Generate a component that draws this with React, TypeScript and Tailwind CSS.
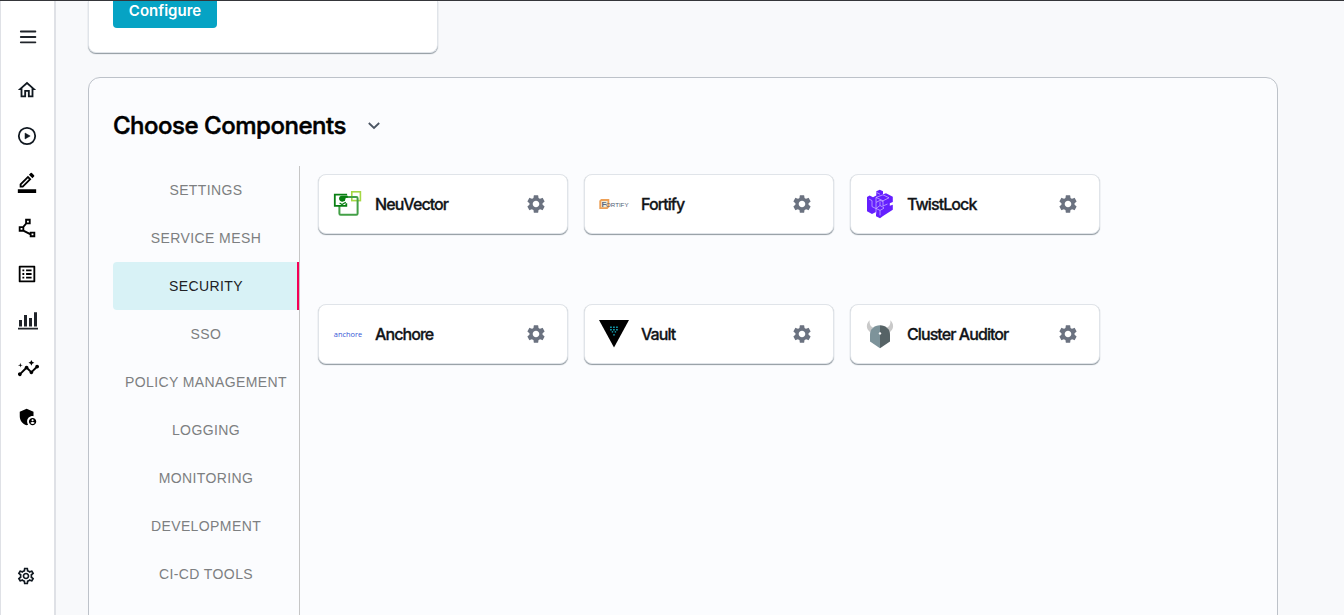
import type { ReactNode } from "react";
import {
  MdOutlineHome,
  MdOutlineBorderColor,
  MdOutlinePolyline,
  MdOutlineListAlt,
  MdInsights,
  MdAdminPanelSettings,
  MdOutlineSettings,
  MdSettings,
} from "react-icons/md";

const categories = [
  "SETTINGS",
  "SERVICE MESH",
  "SECURITY",
  "SSO",
  "POLICY MANAGEMENT",
  "LOGGING",
  "MONITORING",
  "DEVELOPMENT",
  "CI-CD TOOLS",
];

function NeuVectorLogo() {
  return (
    <svg width="30" height="30" viewBox="0 0 30 30" fill="none">
      <rect x="18.8" y="2.8" width="8.6" height="8.8" stroke="#a5d845" strokeWidth="1.6" />
      <path d="M12 8h11.4a1.2 1.2 0 0 1 1.2 1.2v15.4a1.2 1.2 0 0 1-1.2 1.2H7.6a1.2 1.2 0 0 1-1.2-1.2V16" stroke="#43a047" strokeWidth="2" />
      <path d="M13.2 6.4V5.6H1.8v11.2h11.5v-2.6" stroke="#087f12" strokeWidth="1.8" />
      <path d="M9.4 6.8h5.4v2h-2l-1 3.2-3.2.8z" fill="#087f12" />
      <path d="M6.6 14l2.4 1.6 3.8-2.4" stroke="#087f12" strokeWidth="1.2" />
      <circle cx="8.9" cy="9.6" r="2.8" fill="#087f12" />
    </svg>
  );
}

function FortifyLogo() {
  return (
    <svg width="30" height="30" viewBox="0 0 30 30" fill="none">
      <path d="M2.4 11h7v6.6l-1.4 1.6H1.2v-7z" fill="#f0ead9" stroke="#eda057" strokeWidth="1.8" />
      <text x="2.4" y="18" fontFamily="Liberation Sans, sans-serif" fontSize="8" fontWeight="700" fill="#5c6b80">F</text>
      <text x="7" y="17.6" fontFamily="Liberation Sans, sans-serif" fontSize="6" textLength="22.5" lengthAdjust="spacingAndGlyphs" fill="#4f5e73">ORTIFY</text>
    </svg>
  );
}

function TwistLockLogo() {
  return (
    <svg width="30" height="30" viewBox="0 0 30 30" fill="none" strokeLinejoin="round">
      <path
        d="M14.8.7 18 2.2v3l3-1 6.8 3.6v5.1l-3 1.4v2.4l3-1v5L18 27l-3 2.3-4-2V23l-4 2-5-2.8V8l2.6-1.4L8 8.2l3.3-1.8V2.3z"
        fill="#651fff"
      />
      <path
        d="M11.5 3.4l3.5 1.8M11 8.4l7-2.6 6 3-6 3zM18 12v5l4.5-2M11 8.4v5l4-2 3 1M4 10l3 1.6v6l4 2v5M11 13.4v6l4 2 4-2.2M15 21.4v5M15 12.5v4l-4 3M15 16.5l4 2.2"
        stroke="#d3bfff"
        strokeWidth=".7"
      />
    </svg>
  );
}

function AnchoreLogo() {
  return (
    <span className="flex h-[30px] w-[30px] items-center justify-center font-['Open_Sans',sans-serif] text-[7.4px] leading-[14px] whitespace-nowrap text-[#3456d6]">
      anchore
    </span>
  );
}

function VaultLogo() {
  return (
    <svg width="30" height="30" viewBox="0 0 30 30">
      <path d="M0 1h30L15 28.6z" fill="#000" />
      <path
        d="M11.2 7.4h1.5v1.5h-1.5zM14.2 7.4h1.5v1.5h-1.5zM17.2 7.4h1.5v1.5h-1.5zM11.2 9.9h1.5v1.5h-1.5zM14.2 9.9h1.5v1.5h-1.5zM17.2 9.9h1.5v1.5h-1.5zM12.8 12.2h1.4v1.4h-1.4zM15.7 12.2h1.4v1.4h-1.4zM14.2 15.2h1.6v1.4h-1.6z"
        fill="#16b3c8"
      />
    </svg>
  );
}

function ClusterAuditorLogo() {
  return (
    <svg width="30" height="30" viewBox="0 0 30 30">
      <path d="M4.6 1.3C.8 5 1 10 5.2 13.2L8 8.6C5.4 7.5 4.3 5 4.6 1.3zM25.4 1.3c3.8 3.7 3.6 8.7-.6 11.9L22 8.6c2.6-1.1 3.7-3.6 3.4-7.3z" fill="#c9c9c9" />
      <path d="M15 6.3C9 6.3 5 10.3 5 15.5v7l10 6.7z" fill="#7d939a" />
      <path d="M15 6.3c6 0 10 4 10 9.2v7l-10 6.7z" fill="#566366" />
      <circle cx="15" cy="14.4" r="1.2" fill="#fff" />
    </svg>
  );
}

const components: { name: string; logo: ReactNode }[] = [
  { name: "NeuVector", logo: <NeuVectorLogo /> },
  { name: "Fortify", logo: <FortifyLogo /> },
  { name: "TwistLock", logo: <TwistLockLogo /> },
  { name: "Anchore", logo: <AnchoreLogo /> },
  { name: "Vault", logo: <VaultLogo /> },
  { name: "Cluster Auditor", logo: <ClusterAuditorLogo /> },
];

function Sidebar() {
  return (
    <nav className="flex w-14 shrink-0 flex-col items-center border-r-2 border-l border-[#dfe1e6] bg-white pr-[2px] text-black">
      <svg className="mt-6 ml-0.5" width="24" height="24" fill="none" stroke="#20242a" strokeWidth="1.8" strokeLinecap="round">
        <path d="M4.8 6.5h14.6M4.8 12h14.6M4.8 17.3h14.6" />
      </svg>
      <MdOutlineHome className="mt-[30px] text-[#101820]" size={22} />
      <svg className="mt-6" width="22" height="22" fill="none">
        <circle cx="11" cy="11" r="8.2" stroke="#101820" strokeWidth="1.8" />
        <path d="M9 8l5.2 3L9 14z" fill="#101820" stroke="#101820" strokeWidth=".5" />
      </svg>
      <MdOutlineBorderColor className="mt-6" size={22} />
      <MdOutlinePolyline className="mt-6" size={22} />
      <MdOutlineListAlt className="mt-6" size={22} />
      <svg className="mt-[25px] ml-0.5" width="22" height="22" fill="#20242a">
        <path d="M1 17.7h20v1.8H1zM2 10h3v6.5H2zM7 5h3v11.5H7zM12 8h3v8.5h-3zM17 2.2h3v14.3h-3z" />
      </svg>
      <MdInsights className="mt-[25px] ml-[3px]" size={23} />
      <MdAdminPanelSettings className="mt-[26px] ml-0.5" size={22} />
      <MdOutlineSettings className="mt-auto mr-0.5 mb-[29px] text-[#101820]" size={20} />
    </nav>
  );
}

export default function App() {
  return (
    <div className="flex h-[615px] w-[1344px] overflow-hidden border-t border-[#35363a] bg-[#f8f9fb] font-['Inter',sans-serif]">
      <Sidebar />
      <main className="flex flex-1 flex-col pl-8">
        <section className="h-[52px] w-[350px] shrink-0 rounded-b-lg border border-t-0 border-[#e0e4e9] bg-white pl-6 shadow-[0_1px_1px_#8f989f]">
          <button className="flex h-[27px] w-[104px] items-center justify-center rounded-b bg-[#06a3c4] pb-[6px] text-[15px] font-semibold text-white">
            Configure
          </button>
        </section>
        <section className="mt-6 flex h-[560px] w-[1190px] shrink-0 flex-col rounded-xl border border-[#bdc2c9] bg-[#fbfcfe] px-6">
          <header className="mt-8 flex h-8 items-center">
            <h1 className="w-[234px] text-2xl font-medium tracking-[-0.48px] whitespace-nowrap text-black [-webkit-text-stroke:0.5px_black]">Choose Components</h1>
            <svg className="ml-[17px]" width="20" height="20" fill="none" stroke="#4b5563" strokeWidth="1.8">
              <path d="M4.8 7l5.2 5 5.2-5" />
            </svg>
          </header>
          <div className="mt-6 flex flex-1">
            <ul className="w-[187px] shrink-0 border-r border-[#c6c6c6] font-['Liberation_Sans',sans-serif] text-sm tracking-[0.4px]">
              {categories.map((label) => (
                <li
                  key={label}
                  className={
                    label === "SECURITY"
                      ? "flex h-12 items-center justify-center rounded-l border-r-2 border-[#f50057] bg-[#d8f2f6] pl-0.5 text-[#202124]"
                      : "flex h-12 items-center justify-center text-[#7d7f81]"
                  }
                >
                  {label}
                </li>
              ))}
            </ul>
            <div className="ml-[18px] grid grid-cols-[repeat(3,250px)] content-start gap-x-4 gap-y-[70px] pt-2">
              {components.map(({ name, logo }) => (
                <article
                  key={name}
                  className="flex h-[60px] items-center rounded-lg border border-[#e0e4e9] bg-white pr-5 pl-3.5 shadow-[0_1px_1px_#8f989f]"
                >
                  {logo}
                  <h2 className="ml-3 flex-1 text-base font-medium tracking-[-0.92px] text-[#111418] [-webkit-text-stroke:0.3px_#111418]">{name}</h2>
                  <MdSettings className="text-[#6b7280]" size={22} />
                </article>
              ))}
            </div>
          </div>
        </section>
      </main>
    </div>
  );
}
